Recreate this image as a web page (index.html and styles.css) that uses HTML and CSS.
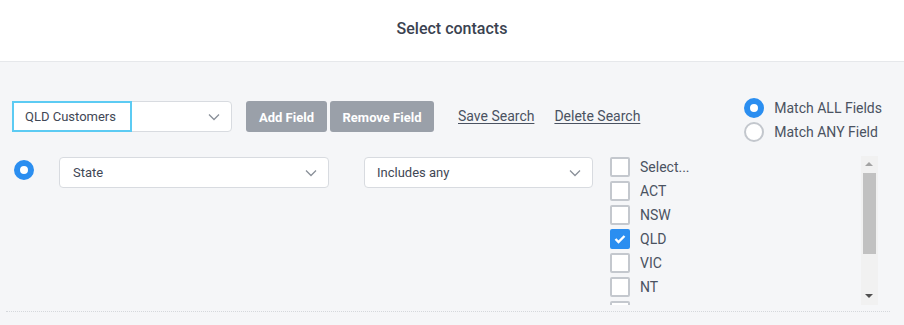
FILE: index.html
```html
<!DOCTYPE html>
<html>
<head>
<meta charset="utf-8">
<link rel="stylesheet" href="styles.css">
</head>
<body>
<header class="header">Select contacts</header>
<main class="main">
  <div class="row-top">
    <div class="select saved">
      <div class="saved-input">QLD Customers</div>
      <svg class="chev" width="12" height="8" viewBox="0 0 12 8"><path d="M1 1.5 L6 6.5 L11 1.5" fill="none" stroke="#8a9099" stroke-width="1.3"/></svg>
    </div>
    <button class="btn add">Add Field</button>
    <button class="btn remove">Remove Field</button>
    <a class="link save">Save Search</a>
    <a class="link delete">Delete Search</a>
    <div class="match">
      <label class="match-opt"><span class="radio on"></span>Match ALL Fields</label>
      <label class="match-opt"><span class="radio"></span>Match ANY Field</label>
    </div>
  </div>
  <div class="row-field">
    <span class="radio on big"></span>
    <div class="select field">
      <span>State</span>
      <svg class="chev" width="12" height="8" viewBox="0 0 12 8"><path d="M1 1.5 L6 6.5 L11 1.5" fill="none" stroke="#8a9099" stroke-width="1.3"/></svg>
    </div>
    <div class="select op">
      <span>Includes any</span>
      <svg class="chev" width="12" height="8" viewBox="0 0 12 8"><path d="M1 1.5 L6 6.5 L11 1.5" fill="none" stroke="#8a9099" stroke-width="1.3"/></svg>
    </div>
    <div class="list">
      <div class="items">
        <div class="item"><span class="cb"></span>Select...</div>
        <div class="item"><span class="cb"></span>ACT</div>
        <div class="item"><span class="cb"></span>NSW</div>
        <div class="item"><span class="cb checked"><svg width="12" height="10" viewBox="0 0 12 10"><path d="M1.5 5 L4.5 8 L10.5 2" fill="none" stroke="#fff" stroke-width="2.4"/></svg></span>QLD</div>
        <div class="item"><span class="cb"></span>VIC</div>
        <div class="item"><span class="cb"></span>NT</div>
        <div class="item"><span class="cb"></span></div>
      </div>
      <div class="scrollbar">
        <div class="arrow up"></div>
        <div class="thumb"></div>
        <div class="track"></div>
        <div class="arrow down"></div>
      </div>
    </div>
  </div>
  <div class="divider"></div>
</main>
</body>
</html>
```
FILE: styles.css
```css
* { box-sizing: border-box; }
html, body { margin: 0; padding: 0; }
body {
  width: 904px;
  height: 325px;
  overflow: hidden;
  background: #f5f6f8;
  font-family: Roboto, "Noto Sans", sans-serif;
  color: #4a5261;
}
.header {
  height: 62px;
  background: #fff;
  border-bottom: 1px solid #e6e8eb;
  display: flex;
  align-items: center;
  justify-content: center;
  font-size: 16px;
  font-weight: 500;
  color: #3a4250;
  padding-bottom: 4px;
}
.main { padding: 0 0 0 12px; }
.row-top {
  display: flex;
  align-items: flex-start;
  margin-top: 36px;
  height: 59px;
}
.select {
  height: 31px;
  background: #fff;
  border: 1px solid #d8dbe0;
  border-radius: 4px;
  display: flex;
  align-items: center;
  font-size: 13px;
  color: #3f4755;
  position: relative;
}
.select .chev { margin-left: auto; margin-right: 11px; }
.saved { width: 220px; margin-top: 3px; }
.saved-input {
  width: 120px;
  height: 31px;
  margin: -1px 0 -1px -1px;
  border: 2px solid #5ccbf3;
  background: #fff;
  padding-left: 11px;
  display: flex;
  align-items: center;
  font-size: 13px;
  color: #3f4755;
}
.btn {
  height: 31px;
  margin-top: 3px;
  border: none;
  border-radius: 3px;
  background: #9aa0a9;
  color: #fff;
  font-family: Roboto, sans-serif;
  font-weight: 700;
  font-size: 13px;
  padding: 1px 0 0;
}
.add { width: 81px; margin-left: 14px; }
.remove { width: 104px; margin-left: 3px; }
.link {
  font-size: 14px;
  text-decoration: underline;
  text-underline-offset: 2px;
  color: #4a5261;
  margin-top: 10px;
}
.save { margin-left: 24px; }
.delete { margin-left: 20px; }
.match {
  margin-left: auto;
  margin-right: 22px;
  display: flex;
  flex-direction: column;
  gap: 4px;
}
.match-opt {
  display: flex;
  align-items: center;
  font-size: 14px;
  color: #4a5261;
  height: 20px;
}
.radio {
  width: 20px;
  height: 20px;
  border-radius: 50%;
  border: 2px solid #c3c7cd;
  background: #fff;
  margin-right: 10px;
  flex: none;
}
.radio.on {
  border: 6px solid #2b8ef0;
}
.row-field {
  display: flex;
  align-items: flex-start;
  height: 149px;
}
.row-field .big { margin: 3px 0 0 2px; }
.field { width: 270px; margin-left: 25px; padding-left: 13px; }
.op { width: 229px; margin-left: 35px; padding-left: 12px; }
.list {
  display: flex;
  margin-left: 17px;
  margin-top: -1px;
  height: 149px;
}
.items {
  width: 251px;
  height: 149px;
  overflow: hidden;
  padding-top: 1px;
}
.item {
  height: 24px;
  display: flex;
  align-items: flex-start;
  font-size: 14px;
  color: #4a5261;
  line-height: 20px;
}
.cb {
  width: 20px;
  height: 20px;
  border: 2px solid #c4c8ce;
  border-radius: 2px;
  background: #fff;
  margin-right: 10px;
  display: flex;
  align-items: center;
  justify-content: center;
  flex: none;
}
.cb.checked { background: #2b8ef0; border-color: #2b8ef0; }
.scrollbar {
  width: 17px;
  height: 149px;
  background: #f1f1f1;
  display: flex;
  flex-direction: column;
  align-items: center;
}
.arrow { height: 17px; width: 17px; position: relative; flex: none; }
.arrow.up::after, .arrow.down::after {
  content: "";
  position: absolute;
  left: 4px;
  width: 0; height: 0;
  border-left: 4px solid transparent;
  border-right: 4px solid transparent;
}
.arrow.up::after { top: 6px; border-bottom: 4px solid #a3a3a3; }
.arrow.down::after { top: 6px; border-top: 4px solid #505050; }
.thumb { width: 13px; height: 81px; background: #c1c1c1; flex: none; }
.track { flex: 1; }
.divider {
  margin: 5px 14px 0 -6px;
  border-top: 1px dotted #d5d8dc;
}
```
